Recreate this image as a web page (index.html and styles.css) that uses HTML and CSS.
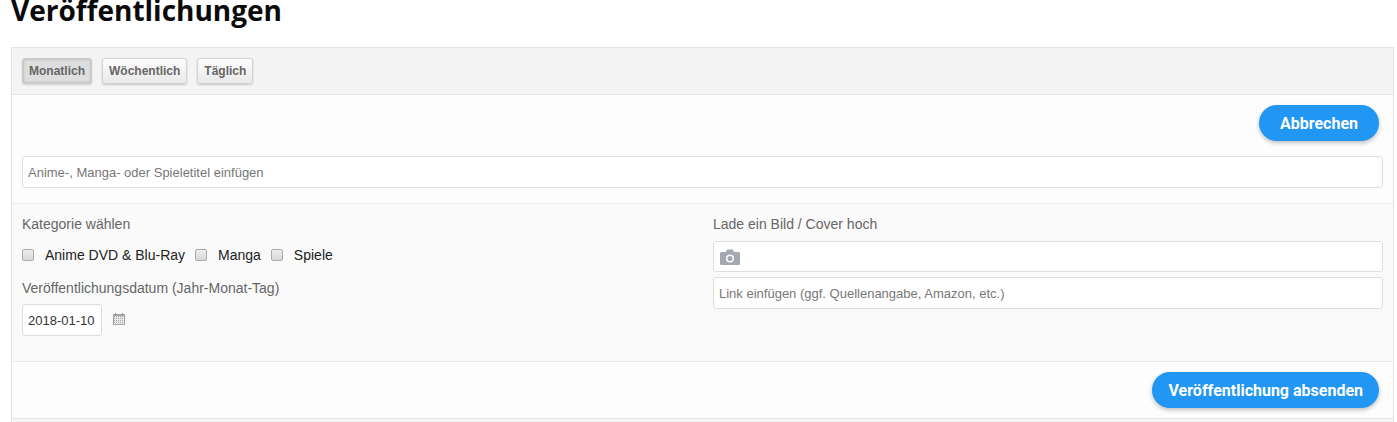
FILE: index.html
```html
<!DOCTYPE html>
<html lang="de">
<head>
    <meta charset="UTF-8">
    <title>Veröffentlichungen</title>
    <link rel="stylesheet" href="styles.css">
</head>
<body>
    <h1 class="page-title">Veröffentlichungen</h1>

    <form class="panel">
        <div class="panel-head">
            <button type="button" class="tab tab-active">Monatlich</button>
            <button type="button" class="tab">Wöchentlich</button>
            <button type="button" class="tab">Täglich</button>
        </div>

        <div class="panel-title">
            <div class="actions">
                <button type="button" class="btn-blue btn-cancel">Abbrechen</button>
            </div>
            <input class="field" type="text" placeholder="Anime-, Manga- oder Spieletitel einfügen">
        </div>

        <div class="panel-body">
            <div class="col-left">
                <div class="label">Kategorie wählen</div>
                <div class="checks">
                    <label class="check check-first"><span class="box"></span>Anime DVD &amp; Blu-Ray</label>
                    <label class="check"><span class="box"></span>Manga</label>
                    <label class="check"><span class="box"></span>Spiele</label>
                </div>
                <div class="label label-date">Veröffentlichungsdatum (Jahr-Monat-Tag)</div>
                <div class="date-row">
                    <input class="field date" type="text" value="2018-01-10">
                    <svg class="cal" width="14" height="14" viewBox="0 0 14 14">
                        <rect x="1" y="2" width="12" height="11" fill="#a5a5a5"/>
                        <rect x="3" y="1" width="1" height="2" fill="#888"/>
                        <rect x="10" y="1" width="1" height="2" fill="#888"/>
                        <path d="M2 5.500h10M2 7.500h10M2 9.500h10M2 11.500h10M3.500 4v8M5.500 4v8M7.500 4v8M9.500 4v8M11.500 4v8" stroke="#e8e8e8" stroke-width="1" fill="none"/>
                    </svg>
                </div>
            </div>
            <div class="col-right">
                <div class="label">Lade ein Bild / Cover hoch</div>
                <div class="field upload">
                    <svg width="20" height="16" viewBox="0 0 20 16">
                        <path fill="#a4a8b0" fill-rule="evenodd" d="M1.500 3H6l1-2.500h6L14 3h4.500A1.500 1.500 0 0 1 20 4.500v10a1.500 1.500 0 0 1-1.500 1.500h-17A1.500 1.500 0 0 1 0 14.500v-10A1.500 1.500 0 0 1 1.500 3zM10 5.500a4 4 0 1 0 0 8 4 4 0 0 0 0-8zm0 1.500a2.500 2.500 0 1 1 0 5 2.500 2.500 0 0 1 0-5z"/>
                    </svg>
                </div>
                <input class="field" type="text" placeholder="Link einfügen (ggf. Quellenangabe, Amazon, etc.)">
            </div>
        </div>

        <div class="panel-foot">
            <button type="button" class="btn-blue">Veröffentlichung absenden</button>
        </div>
    </form>
</body>
</html>
```

FILE: styles.css
```css
html, body {
    height: 422px;
    overflow: hidden;
}

body {
    margin: 0;
    padding: 0 3px 0 11px;
    background: #fff;
    font-family: "Liberation Sans", Arial, sans-serif;
    font-size: 14px;
    color: #666;
}

.page-title {
    margin: 0 0 18px;
    height: 29px;
    font-family: "Open Sans", sans-serif;
    font-size: 28px;
    line-height: 20px;
    font-weight: 700;
    color: #0a0a0a;
}

.panel {
    height: 376px;
    overflow: hidden;
    border: 1px solid #e3e3e3;
    background: #f5f5f5;
}

.panel-head {
    display: flex;
    gap: 10px;
    height: 47px;
    padding: 10px 10px 0;
    box-sizing: border-box;
    background: #f4f4f4;
    border-bottom: 1px solid #e6e6e6;
}

.tab {
    height: 26px;
    padding: 0 6px;
    font-family: "Liberation Sans", Arial, sans-serif;
    font-size: 12px;
    font-weight: 700;
    color: #666;
    background: linear-gradient(#fdfdfd, #e9e9e9);
    border: 1px solid #d4d4d4;
    border-radius: 3px;
    box-shadow: 0 1px 2px rgba(0, 0, 0, 0.2);
}

.tab-active {
    background: #dedede;
    border-color: #ccc;
    box-shadow: inset 0 0 3px rgba(0, 0, 0, 0.25), 0 1px 2px rgba(0, 0, 0, 0.15);
}

.panel-title {
    height: 109px;
    padding: 10px 10px 0;
    box-sizing: border-box;
    background: #fdfdfd;
    border-bottom: 1px solid #eaeaea;
}

.actions {
    display: flex;
    justify-content: flex-end;
    padding-right: 4px;
    margin-bottom: 15px;
}

.btn-blue {
    height: 36px;
    padding: 0 16px;
    font-family: Roboto, sans-serif;
    font-size: 16px;
    font-weight: 700;
    color: #fff;
    background: #2196f3;
    border: none;
    border-radius: 18px;
    box-shadow: 0 2px 4px rgba(0, 0, 0, 0.25);
}

.btn-cancel {
    padding: 0 21px;
}

.field {
    display: block;
    width: 100%;
    height: 32px;
    padding: 0 5px;
    box-sizing: border-box;
    font-family: "Liberation Sans", Arial, sans-serif;
    font-size: 13px;
    color: #333;
    background: #fff;
    border: 1px solid #ddd;
    border-radius: 3px;
}

.field::placeholder {
    color: #777;
    opacity: 1;
}

.panel-body {
    display: flex;
    height: 158px;
    padding: 11px 10px 0;
    box-sizing: border-box;
    background: #fafafa;
    border-bottom: 1px solid #eaeaea;
}

.col-left {
    width: 691px;
    flex: none;
}

.col-right {
    flex: 1;
}

.label {
    height: 18px;
    line-height: 18px;
}

.checks {
    display: flex;
    gap: 10px;
    margin-top: 13px;
    height: 18px;
}

.check {
    display: flex;
    align-items: center;
    font-size: 14px;
    color: #222;
}

.box {
    width: 10px;
    height: 10px;
    margin-right: 11px;
    background: linear-gradient(#eee, #d8d8d8);
    border: 1px solid #aaa;
    border-radius: 2px;
}

.label-date {
    margin-top: 15px;
}

.date-row {
    display: flex;
    align-items: center;
    gap: 10px;
    margin-top: 7px;
}

.date {
    width: 80px;
}

.cal {
    margin-bottom: 2px;
}

.upload {
    display: flex;
    align-items: center;
    height: 31px;
    margin-top: 8px;
    margin-bottom: 5px;
    padding-left: 6px;
}

.panel-foot {
    display: flex;
    justify-content: flex-end;
    height: 57px;
    padding: 10px 14px 0 0;
    box-sizing: border-box;
    background: #fdfdfd;
    border-bottom: 1px solid #e6e6e6;
}
```
